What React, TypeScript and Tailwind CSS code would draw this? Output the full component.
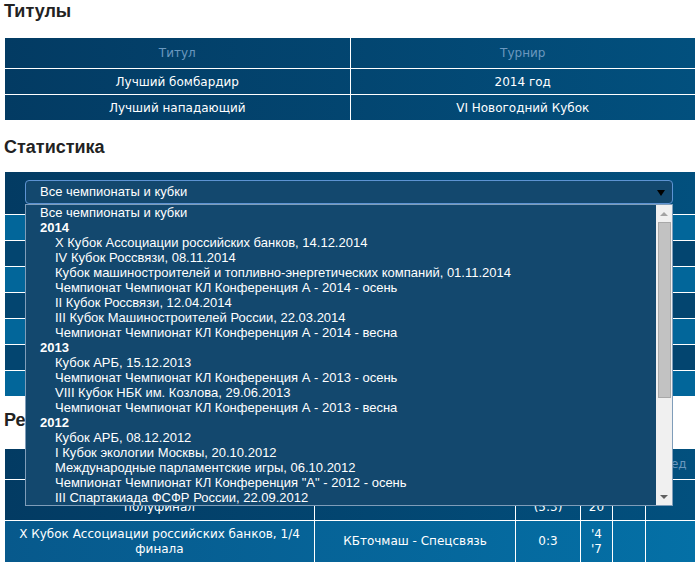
import React from 'react';

type Item = { text: string; kind: 'all' | 'group' | 'option' };

const items: Item[] = [
  { text: 'Все чемпионаты и кубки', kind: 'all' },
  { text: '2014', kind: 'group' },
  { text: 'X Кубок Ассоциации российских банков, 14.12.2014', kind: 'option' },
  { text: 'IV Кубок Россвязи, 08.11.2014', kind: 'option' },
  { text: 'Кубок машиностроителей и топливно-энергетических компаний, 01.11.2014', kind: 'option' },
  { text: 'Чемпионат Чемпионат КЛ Конференция А - 2014 - осень', kind: 'option' },
  { text: 'II Кубок Россвязи, 12.04.2014', kind: 'option' },
  { text: 'III Кубок Машиностроителей России, 22.03.2014', kind: 'option' },
  { text: 'Чемпионат Чемпионат КЛ Конференция А - 2014 - весна', kind: 'option' },
  { text: '2013', kind: 'group' },
  { text: 'Кубок АРБ, 15.12.2013', kind: 'option' },
  { text: 'Чемпионат Чемпионат КЛ Конференция А - 2013 - осень', kind: 'option' },
  { text: 'VIII Кубок НБК им. Козлова, 29.06.2013', kind: 'option' },
  { text: 'Чемпионат Чемпионат КЛ Конференция А - 2013 - весна', kind: 'option' },
  { text: '2012', kind: 'group' },
  { text: 'Кубок АРБ, 08.12.2012', kind: 'option' },
  { text: 'I Кубок экологии Москвы, 20.10.2012', kind: 'option' },
  { text: 'Международные парламентские игры, 06.10.2012', kind: 'option' },
  { text: 'Чемпионат Чемпионат КЛ Конференция "А" - 2012 - осень', kind: 'option' },
  { text: 'III Спартакиада ФСФР России, 22.09.2012', kind: 'option' },
];

const Heading = ({ children }: { children: React.ReactNode }) => (
  <h2 className="ml-[-1px] text-[18px] font-bold leading-[22px] text-[#222] font-['Liberation_Sans',Arial,sans-serif]">
    {children}
  </h2>
);

const TitlesTable = () => (
  <div className="w-[690px] text-[12px] font-['DejaVu_Sans',Verdana,sans-serif]">
    {/* шапка */}
    <div className="flex h-[30px] bg-gradient-to-r from-[#033b63] to-[#02507e] text-[#6a98bf]">
      <div className="flex flex-1 items-center justify-center">Титул</div>
      <div className="flex flex-1 items-center justify-center border-l border-white">Турнир</div>
    </div>
    {[
      ['Лучший бомбардир', '2014 год'],
      ['Лучший нападающий', 'VI Новогодний Кубок'],
    ].map(([a, b]) => (
      <div key={a} className="flex h-[26px] border-t border-white bg-gradient-to-r from-[#033b63] to-[#02507e] text-white">
        <div className="flex flex-1 items-center justify-center">{a}</div>
        <div className="flex flex-1 items-center justify-center border-l border-white">{b}</div>
      </div>
    ))}
  </div>
);

const Dropdown = () => (
  <div className="relative w-[648px] h-[24px] rounded-[4px] border border-[#5d93d3] bg-[#13486e] font-['Liberation_Sans',Arial,sans-serif] text-[13px] text-white">
    <div className="flex h-full items-center pl-[14px]">Все чемпионаты и кубки</div>
    <div className="absolute right-[7px] top-[9px] h-0 w-0 border-x-[4px] border-t-[6px] border-x-transparent border-t-black" />

    {/* раскрытый список */}
    <div className="absolute left-[-1px] top-[23px] z-10 flex h-[302px] w-[648px] border border-[#7f9db9] bg-[#13486e]">
      <div className="flex-1 overflow-hidden">
        {items.map((it, i) => (
          <div
            key={i}
            className={
              it.kind === 'option'
                ? 'h-[15px] whitespace-nowrap pl-[29px] leading-[15px]'
                : it.kind === 'group'
                ? 'h-[15px] whitespace-nowrap pl-[14px] font-bold leading-[15px]'
                : 'h-[15px] whitespace-nowrap pl-[14px] leading-[15px]'
            }
          >
            {it.text}
          </div>
        ))}
      </div>
      {/* полоса прокрутки */}
      <div className="flex w-[16px] flex-col items-center bg-[#f0f0f0]">
        <div className="flex h-[17px] items-center justify-center">
          <div className="h-0 w-0 border-x-[4px] border-b-[4px] border-x-transparent border-b-[#a3a3a3]" />
        </div>
        <div className="h-[176px] w-[13px] border border-[#a8a8a8] bg-[#c2c2c2]" />
        <div className="flex-1" />
        <div className="flex h-[17px] items-center justify-center">
          <div className="h-0 w-0 border-x-[4px] border-t-[4px] border-x-transparent border-t-[#606060]" />
        </div>
      </div>
    </div>
  </div>
);

const StatsTable = () => (
  <div className="w-[690px]">
    <div className="h-[42px] bg-gradient-to-r from-[#033b63] to-[#02507e] pl-[20px] pt-[8px]">
      <Dropdown />
    </div>
    {['light', 'dark', 'light', 'dark', 'light', 'dark', 'light'].map((t, i) => (
      <div
        key={i}
        className={
          t === 'light'
            ? 'h-[26px] border-t border-white bg-[#02669a]'
            : 'h-[26px] border-t border-white bg-[#034570]'
        }
      />
    ))}
  </div>
);

const cols = ['w-[309px]', 'w-[201px]', 'w-[65px]', 'w-[32px]', 'w-[33px]', 'w-[50px]'];

const Cell = ({ i, children }: { i: number; children?: React.ReactNode }) => (
  <div
    className={`${cols[i]} flex shrink-0 flex-col items-center justify-center text-center leading-[15px] ${
      i > 0 ? 'border-l border-white' : ''
    }`}
  >
    {children}
  </div>
);

const ResultsTable = () => (
  <div className="w-[690px] text-[12px] font-['DejaVu_Sans',Verdana,sans-serif]">
    <div className="flex h-[30px] bg-gradient-to-r from-[#033b63] to-[#02507e] text-[#6a98bf]">
      <Cell i={0}>Турнир</Cell>
      <Cell i={1}>Матч</Cell>
      <Cell i={2}>Счёт</Cell>
      <Cell i={3}>Мин</Cell>
      <Cell i={4}>Гол</Cell>
      <Cell i={5}>Пред</Cell>
    </div>
    <div className="flex h-[41px] border-t border-white bg-gradient-to-r from-[#033b63] to-[#02507e] text-white">
      <Cell i={0}>
        <span>IV Кубок Россвязи,</span>
        <span>полуфинал</span>
      </Cell>
      <Cell i={1}>КБточмаш - Связист</Cell>
      <Cell i={2}>
        <span>2:2</span>
        <span>(5:3)</span>
      </Cell>
      <Cell i={3}>
        <span>'1</span>
        <span>20</span>
      </Cell>
      <Cell i={4} />
      <Cell i={5} />
    </div>
    <div className="flex h-[42px] border-t border-white bg-gradient-to-r from-[#07598c] to-[#0470a6] text-white">
      <Cell i={0}>
        <span>X Кубок Ассоциации российских банков, 1/4</span>
        <span>финала</span>
      </Cell>
      <Cell i={1}>КБточмаш - Спецсвязь</Cell>
      <Cell i={2}>0:3</Cell>
      <Cell i={3}>
        <span>'4</span>
        <span>'7</span>
      </Cell>
      <Cell i={4} />
      <Cell i={5} />
    </div>
  </div>
);

export default function App() {
  return (
    <div className="h-[562px] w-[699px] overflow-hidden bg-white pl-[5px]">
      <Heading>Титулы</Heading>
      <div className="mt-[16px]">
        <TitlesTable />
      </div>
      <div className="mt-[16px]">
        <Heading>Статистика</Heading>
      </div>
      <div className="relative z-10 mt-[14px]">
        <StatsTable />
      </div>
      <div className="mt-[13px]">
        <Heading>Результаты</Heading>
      </div>
      <div className="mt-[18px]">
        <ResultsTable />
      </div>
    </div>
  );
}
